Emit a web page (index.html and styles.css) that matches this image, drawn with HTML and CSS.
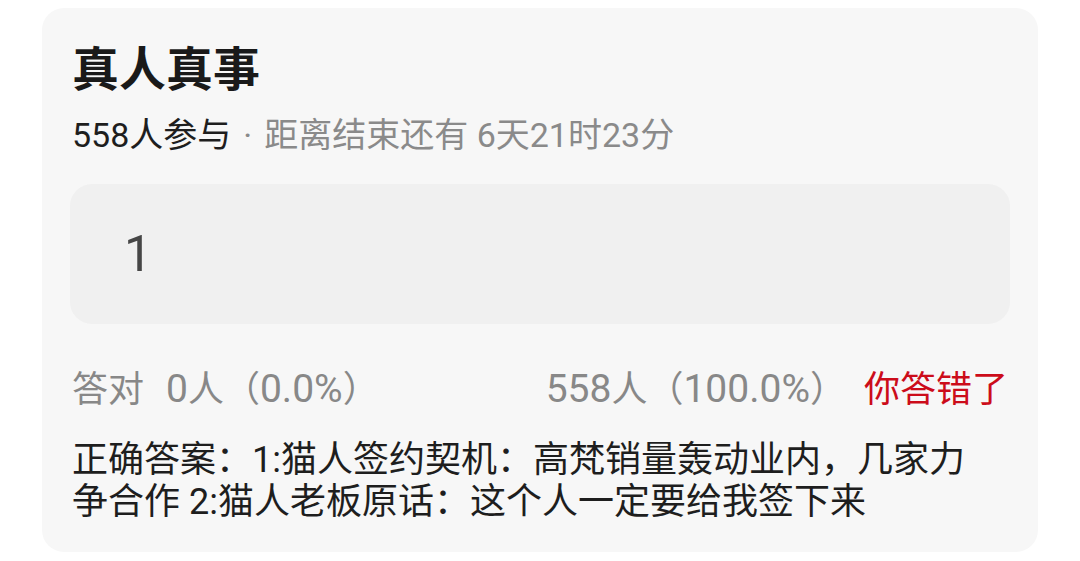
FILE: index.html
```html
<!DOCTYPE html>
<html lang="zh-CN">
<head>
<meta charset="utf-8">
<title>真人真事</title>
<link rel="stylesheet" href="styles.css">
</head>
<body>
  <div class="card">
    <h1 class="title">真人真事</h1>
    <p class="meta"><span class="count">558人参与</span><span class="dot">·</span><span class="remain">距离结束还有 6天21时23分</span></p>
    <div class="answer-box">1</div>
    <div class="stats">
      <div class="stat-left"><span class="stat-label">答对</span><span><span class="num">0</span>人（<span class="num">0.0%</span>）</span></div>
      <div class="stat-right"><span class="stat-wrong"><span class="num">558</span>人（<span class="num">100.0%</span>）</span><span class="verdict">你答错了</span></div>
    </div>
    <p class="solution">正确答案：1:猫人签约契机：高梵销量轰动业内，几家力<br>争合作 2:猫人老板原话：这个人一定要给我签下来</p>
  </div>
</body>
</html>
```

FILE: styles.css
```css
* {
  box-sizing: border-box;
}

html, body {
  margin: 0;
  padding: 0;
  background: #ffffff;
}

body {
  font-family: Roboto, "Noto Sans CJK SC", sans-serif;
  color: #1e1e1e;
  padding: 8px 42px 0;
}

.card {
  background: #f7f7f7;
  border-radius: 22px;
  padding: 32px 30px 29px;
}

.title {
  margin: 0;
  font-size: 47px;
  line-height: 60px;
  font-weight: 700;
  color: #1a1a1a;
}

.meta {
  margin: 13px 0 0;
  font-size: 34px;
  line-height: 44px;
  color: #8a8a8a;
}

.meta .count {
  color: #1e1e1e;
}

.meta .dot {
  margin: 0 12px;
}

.answer-box {
  margin: 27px -2px 0;
  height: 140px;
  background: #f0f0f0;
  border-radius: 22px;
  padding-left: 54px;
  display: flex;
  align-items: center;
  font-size: 50px;
  color: #464646;
}

.stats {
  margin-top: 45px;
  display: flex;
  justify-content: space-between;
  align-items: center;
  font-size: 36px;
  line-height: 40px;
  color: #888888;
}

.stats .num {
  font-size: 39px;
}

.stat-label {
  margin-right: 22px;
}

.stat-wrong {
  margin-right: 18px;
}

.verdict {
  color: #cc0c1a;
}

.solution {
  margin: 29px 0 0;
  font-size: 36px;
  line-height: 42px;
  color: #1e1e1e;
}
```
